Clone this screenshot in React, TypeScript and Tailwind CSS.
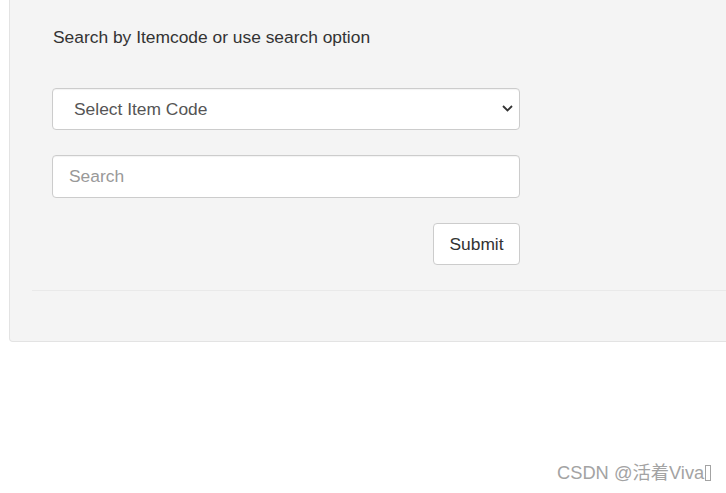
import { useState } from 'react';

export default function App() {
  const [code, setCode] = useState('');
  const [query, setQuery] = useState('');

  return (
    <div className="relative w-[726px] h-[493px] overflow-hidden bg-white font-['Liberation_Sans',Arial,sans-serif] text-[#333]">
      {/* Panel */}
      <div className="ml-[9px] w-[760px] h-[342px] bg-[#f4f4f4] border border-t-0 border-[#e3e3e3] rounded-b-[4px] pl-[22px] pt-[25px]">
        <p className="pl-[21px] text-[17.4px] leading-[24px]">Search by Itemcode or use search option</p>

        {/* Form */}
        <div className="ml-[20px] w-[468px] mt-[39px] flex flex-col">
          <div className="relative">
            <select
              value={code}
              onChange={(e) => setCode(e.target.value)}
              className="appearance-none w-full h-[42px] rounded-[4px] border border-[#ccc] bg-white pl-[21px] pr-8 text-[17.4px] text-[#555] outline-none shadow-[inset_0_1px_1px_rgba(0,0,0,0.05)]"
            >
              <option value="">Select Item Code</option>
              <option value="A100">A100</option>
            </select>
            <svg
              className="absolute right-[7px] top-[17px] pointer-events-none"
              width="11"
              height="7"
              viewBox="0 0 11 7"
              fill="none"
            >
              <path d="M1 1l4.5 4.5L10 1" stroke="#333" strokeWidth="1.8" />
            </svg>
          </div>

          <input
            value={query}
            onChange={(e) => setQuery(e.target.value)}
            placeholder="Search"
            className="mt-[25px] w-full h-[43px] rounded-[4px] border border-[#ccc] bg-white px-[16px] text-[17.4px] text-[#555] placeholder:text-[#999] outline-none shadow-[inset_0_1px_1px_rgba(0,0,0,0.05)]"
          />

          <div className="mt-[25px] flex justify-end">
            <button className="w-[87px] h-[42px] rounded-[4px] border border-[#ccc] bg-white text-[17.4px] text-[#333]">
              Submit
            </button>
          </div>
        </div>

        <div className="mt-[25px] h-px bg-[#e9e9e9]" />
      </div>

      {/* Watermark */}
      <div className="absolute left-[557px] top-[461px] flex items-center text-[18.3px] leading-[24px] text-[#a3a3a3] font-['Liberation_Sans','Noto_Sans_CJK_SC',sans-serif]">
        CSDN @活着Viva
        <span className="inline-block ml-[1px] w-[6px] h-[16px] border border-[#a3a3a3]" />
      </div>
    </div>
  );
}
